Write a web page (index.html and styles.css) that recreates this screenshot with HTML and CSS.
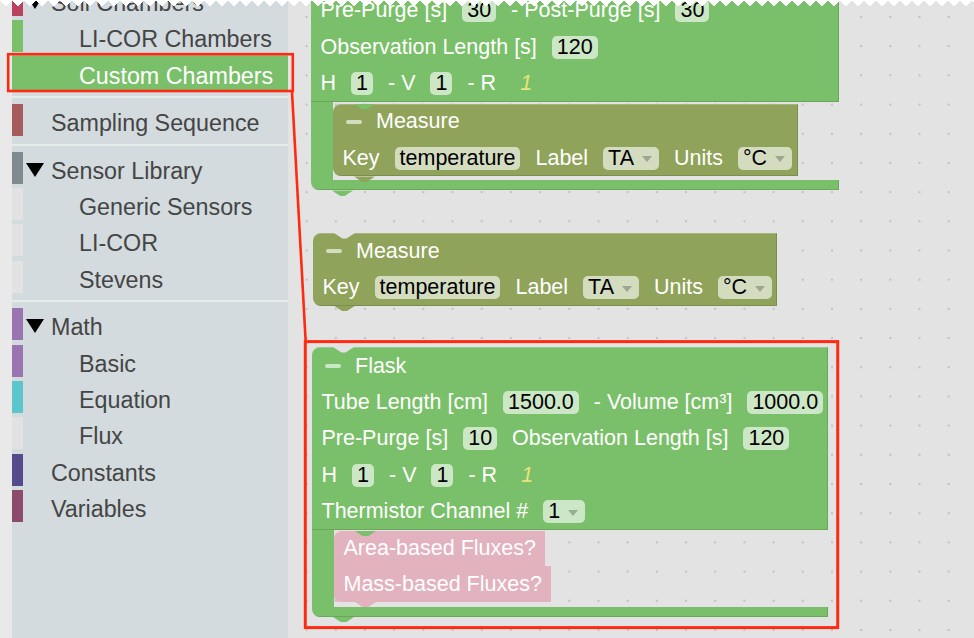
FILE: index.html
```html
<!DOCTYPE html>
<html lang="en">
<head>
    <meta charset="UTF-8">
    <meta name="viewport" content="width=device-width, initial-scale=1.0">
    <title>Custom Chambers</title>
    <link rel="stylesheet" href="styles.css">
</head>
<body>
<div class="page">
    <div class="gutter"></div>

    <div class="toolbox">
        <div class="cat first"><span class="strip soil"></span><span class="arrow"></span><span class="name">Soil Chambers</span></div>
        <div class="cat sub"><span class="strip chamber"></span><span class="name">LI-COR Chambers</span></div>
        <div class="cat sub selected"><span class="strip chamber"></span><span class="name">Custom Chambers</span></div>
        <div class="sep"></div>
        <div class="cat"><span class="strip sequence"></span><span class="name">Sampling Sequence</span></div>
        <div class="sep"></div>
        <div class="cat"><span class="strip sensor"></span><span class="arrow"></span><span class="name">Sensor Library</span></div>
        <div class="cat sub"><span class="strip blank"></span><span class="name">Generic Sensors</span></div>
        <div class="cat sub"><span class="strip blank"></span><span class="name">LI-COR</span></div>
        <div class="cat sub"><span class="strip blank"></span><span class="name">Stevens</span></div>
        <div class="sep"></div>
        <div class="cat"><span class="strip math"></span><span class="arrow"></span><span class="name">Math</span></div>
        <div class="cat sub"><span class="strip math"></span><span class="name">Basic</span></div>
        <div class="cat sub"><span class="strip equation"></span><span class="name">Equation</span></div>
        <div class="cat sub"><span class="strip blank"></span><span class="name">Flux</span></div>
        <div class="cat"><span class="strip constants"></span><span class="name">Constants</span></div>
        <div class="cat"><span class="strip variables"></span><span class="name">Variables</span></div>
    </div>

    <div class="workspace">
        <!-- chamber block, cut off by the top of the shot -->
        <div class="block green b-chamber">
            <div class="body">
                <div class="row"><span>Pre-Purge [s]</span><span class="pill">30</span><span>- Post-Purge [s]</span><span class="pill">30</span></div>
                <div class="row"><span>Observation Length [s]</span><span class="pill">120</span></div>
                <div class="row"><span>H</span><span class="pill">1</span><span>- V</span><span class="pill">1</span><span>- R</span><span class="rot">1</span></div>
            </div>
            <div class="stmt">
                <div class="arm"></div>
                <div class="stack">
                    <div class="block olive notch measure-in">
                        <div class="body solo">
                            <div class="row title"><span class="dash"></span><span>Measure</span></div>
                            <div class="row"><span>Key</span><span class="pill">temperature</span><span>Label</span><span class="pill drop">TA</span><span>Units</span><span class="pill drop">°C</span></div>
                        </div>
                    </div>
                </div>
            </div>
            <div class="foot"></div>
        </div>

        <!-- loose measure block -->
        <div class="block olive notch top b-measure">
            <div class="body solo">
                <div class="row title"><span class="dash"></span><span>Measure</span></div>
                <div class="row"><span>Key</span><span class="pill">temperature</span><span>Label</span><span class="pill drop">TA</span><span>Units</span><span class="pill drop">°C</span></div>
            </div>
        </div>

        <!-- flask block -->
        <div class="block green notch top b-flask">
            <div class="body">
                <div class="row title"><span class="dash"></span><span>Flask</span></div>
                <div class="row"><span>Tube Length [cm]</span><span class="pill">1500.0</span><span>- Volume [cm³]</span><span class="pill">1000.0</span></div>
                <div class="row"><span>Pre-Purge [s]</span><span class="pill">10</span><span>Observation Length [s]</span><span class="pill">120</span></div>
                <div class="row"><span>H</span><span class="pill">1</span><span>- V</span><span class="pill">1</span><span>- R</span><span class="rot">1</span></div>
                <div class="row"><span>Thermistor Channel #</span><span class="pill drop">1</span></div>
            </div>
            <div class="stmt">
                <div class="arm"></div>
                <div class="stack">
                    <div class="block pink notch flux-first">
                        <div class="row flux">Area-based Fluxes?</div>
                    </div>
                    <div class="block pink flux-last">
                        <div class="row flux">Mass-based Fluxes?</div>
                    </div>
                </div>
            </div>
            <div class="foot"></div>
        </div>
    </div>

    <svg class="marks" width="974" height="638" viewBox="0 0 974 638">
        <rect x="8.2" y="54.2" width="284.6" height="36.8" fill="none" stroke="#ff2a12" stroke-width="2.6"/>
        <line x1="292" y1="92" x2="305.7" y2="342" stroke="#ff2a12" stroke-width="2.6"/>
        <rect x="305.3" y="341.6" width="532.4" height="286" fill="none" stroke="#ff2a12" stroke-width="3"/>
    </svg>
    <div class="tear"></div>
</div>
</body>
</html>
```

FILE: styles.css
```css
body { margin: 0; background: #e9e9e9; }
.page { position: relative; display: flex; width: 974px; height: 638px; overflow: hidden; font-family: "Liberation Sans", Arial, sans-serif; }
.gutter { flex: none; width: 12px; background: #e9e9e9; }

/* toolbox */
.toolbox { flex: none; width: 276px; display: flex; flex-direction: column; background: #d3dbde; }
.cat { flex: none; display: flex; align-items: center; height: 32px; margin-bottom: 4.4px; font-size: 23.3px; color: #454545; white-space: nowrap; }
.cat.first { margin-top: -16px; }
.strip { flex: none; width: 11px; height: 100%; }
.name { margin: 7px 0 0 28px; }
.arrow { flex: none; margin: 4px 0 0 3px; border-left: 9px solid transparent; border-right: 9px solid transparent; border-top: 14px solid #000; }
.arrow + .name { margin-left: 7px; }
.sub .name { margin-left: 56px; }
.selected { background: #7abf69; color: #fff; box-shadow: 0 -1.5px 0 #7abf69, 0 1px 0 #7abf69; }
.sep { flex: none; height: 2px; margin: 3px 0 6px; background: #e5eaeb; }

.soil { background: #b9435f; }
.chamber { background: #7abf69; }
.sequence { background: #a65c5c; }
.sensor { background: #7f8b90; }
.blank { background: #e2e2e2; }
.math { background: #9a74b1; }
.equation { background: #5cc6cc; }
.constants { background: #554a8c; }
.variables { background: #8d4b6c; }

/* workspace */
.workspace {
    position: relative; flex: 1;
    background-color: #e3e3e3;
    background-image: radial-gradient(circle, #c0c0c0 0.8px, transparent 1.4px);
    background-size: 29.2px 29.2px;
    background-position: 4px 2.4px;
}

.block { position: relative; color: #fff; font-size: 21.5px; --under: #e3e3e3; }
.green { --c: #7abf69; }
.olive { --c: #8fa35b; }
.pink { --c: #e2b2be; }

.block::after { content: ""; position: absolute; left: 21px; top: 100%; width: 21px; height: 5.5px; background: var(--c); clip-path: polygon(0 0, 100% 0, 60% 100%, 40% 100%); }
.notch::before { content: ""; position: absolute; z-index: 1; left: 21px; top: 0; width: 21px; height: 5.5px; background: var(--under); clip-path: polygon(0 0, 100% 0, 60% 100%, 40% 100%); }

.b-chamber { position: absolute; left: 23px; top: -29px; width: 528px; }
.b-chamber > .body { padding-top: 21.5px; }
.b-measure { position: absolute; left: 25px; top: 233px; width: 464px; }
.b-flask { position: absolute; left: 24px; top: 347px; width: 516px; }
.b-flask > .body { padding-top: 1px; }
.measure-in { width: 465px; --under: #7abf69; }

.body { background: var(--c); border-top-left-radius: 8px; box-shadow: inset -1px -1px 0 rgba(0, 0, 0, 0.13), inset 0 1px 0 rgba(255, 255, 255, 0.2); }
.body.solo { border-bottom-left-radius: 8px; }

.row { display: flex; align-items: center; gap: 15px; height: 36.4px; padding-left: 9.5px; white-space: nowrap; }
.row.title { gap: 14px; padding-left: 13px; }
.dash { flex: none; width: 16px; height: 4.5px; border-radius: 2px; background: rgba(255, 255, 255, 0.62); }

.pill { display: flex; align-items: center; height: 23px; padding: 0 5px; border-radius: 5px; background: rgba(255, 255, 255, 0.62); color: #000; }
.drop { padding-right: 7px; }
.drop::after { content: ""; margin: 2px 0 0 8px; border-left: 5px solid transparent; border-right: 5px solid transparent; border-top: 6px solid rgba(0, 0, 0, 0.25); }
.rot { margin-left: 9px; color: #e9e37c; font-style: italic; }

/* statement input */
.stmt { display: flex; }
.arm { flex: none; width: 22px; background: var(--c); }
.b-chamber .stack { padding: 2px 0 4px; }
.b-flask .stack { padding: 1px 0 5px; }
.stack { flex: 1; display: flex; flex-direction: column; align-items: flex-start; }
.foot { height: 10px; background: var(--c); border-bottom-left-radius: 8px; box-shadow: inset -1px -1px 0 rgba(0, 0, 0, 0.13); }

.flux-first { --under: #7abf69; }
.row.flux { height: 35.5px; padding: 0 9.5px; background: var(--c); }
.flux-first .row { border-top-left-radius: 8px; }
.flux-last .row { border-bottom-left-radius: 6px; }

/* annotations */
.marks { position: absolute; left: 0; top: 0; pointer-events: none; }
.tear { position: absolute; left: 0; right: 0; top: 0; height: 7px; background: conic-gradient(from -40.6deg at 50% 100%, #fff 81.2deg, transparent 0) 0 0 / 12px 7px repeat-x; }
```
